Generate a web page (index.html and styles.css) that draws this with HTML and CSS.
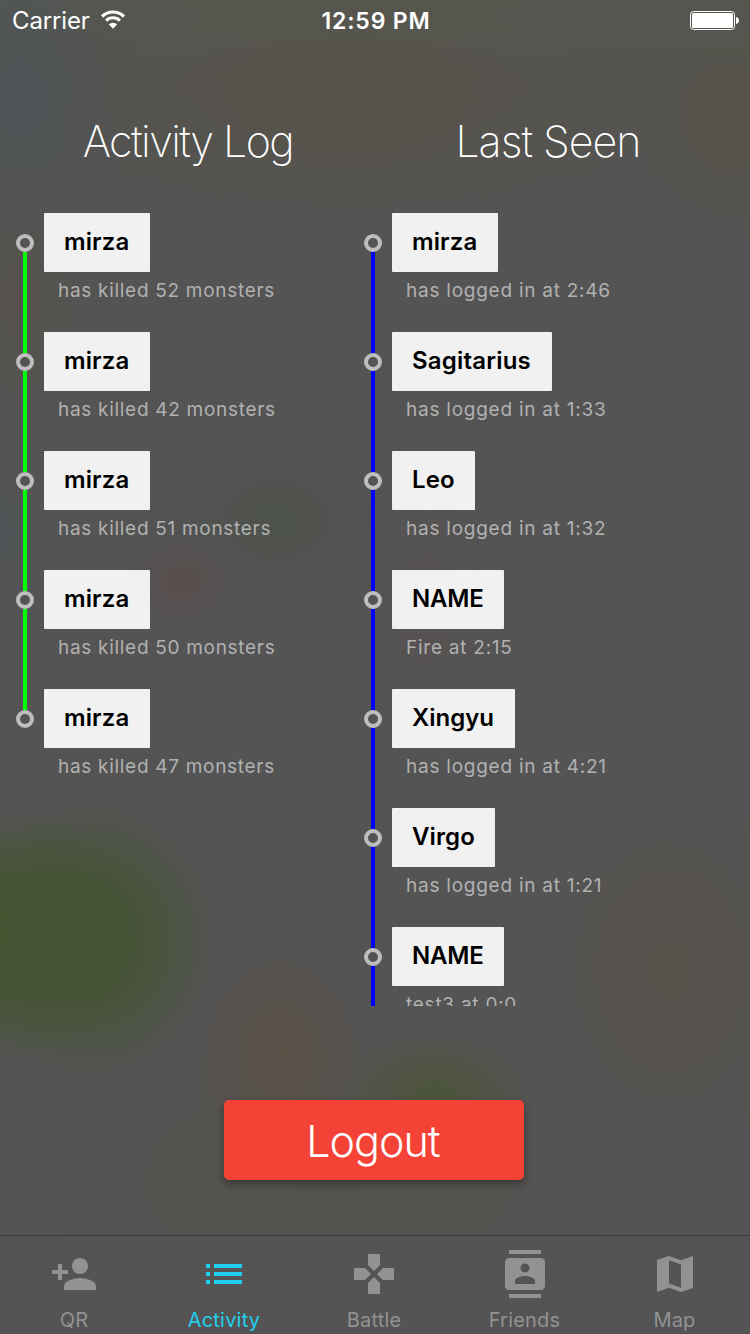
FILE: index.html
```html
<!DOCTYPE html>
<html lang="en">
<head>
<meta charset="utf-8">
<title>Activity</title>
<link rel="stylesheet" href="styles.css">
</head>
<body>
<div class="screen">
  <header class="status">
    <div class="status-left">
      <span class="carrier">Carrier</span>
      <svg class="wifi" width="26" height="20" viewBox="0 0 26 20">
        <path d="M2.1 6.5a15.4 15.4 0 0 1 21.8 0" fill="none" stroke="#fff" stroke-width="3.2"/>
        <path d="M6.1 10.6a9.8 9.8 0 0 1 13.8 0" fill="none" stroke="#fff" stroke-width="3"/>
        <path d="M13 18.7l-4.1-4.2a5.8 5.8 0 0 1 8.2 0z" fill="#fff"/>
      </svg>
    </div>
    <span class="clock">12:59 PM</span>
    <svg class="battery" width="50" height="20" viewBox="0 0 50 20">
      <rect x=".5" y=".5" width="44" height="18" rx="3" fill="none" stroke="#fff"/>
      <rect x="2" y="2" width="41" height="15" rx="1.5" fill="#fff"/>
      <path d="M46 6c1.800.4 3 1.800 3 3.500s-1.200 3.100-3 3.500z" fill="#fff"/>
    </svg>
  </header>

  <div class="titles">
    <h1 class="title title-log">Activity Log</h1>
    <h1 class="title title-seen">Last Seen</h1>
  </div>

  <main class="columns">
    <ul class="timeline green">
      <li class="entry"><span class="rail"></span><div class="body"><b class="name mirza">mirza</b><p class="note killed">has killed 52 monsters</p></div></li>
      <li class="entry"><span class="rail"></span><div class="body"><b class="name mirza">mirza</b><p class="note killed">has killed 42 monsters</p></div></li>
      <li class="entry"><span class="rail"></span><div class="body"><b class="name mirza">mirza</b><p class="note killed">has killed 51 monsters</p></div></li>
      <li class="entry"><span class="rail"></span><div class="body"><b class="name mirza">mirza</b><p class="note killed">has killed 50 monsters</p></div></li>
      <li class="entry last"><span class="rail"></span><div class="body"><b class="name mirza">mirza</b><p class="note killed">has killed 47 monsters</p></div></li>
    </ul>
    <ul class="timeline blue">
      <li class="entry"><span class="rail"></span><div class="body"><b class="name mirza">mirza</b><p class="note">has logged in at 2:46</p></div></li>
      <li class="entry"><span class="rail"></span><div class="body"><b class="name sagitarius">Sagitarius</b><p class="note">has logged in at 1:33</p></div></li>
      <li class="entry"><span class="rail"></span><div class="body"><b class="name leo">Leo</b><p class="note">has logged in at 1:32</p></div></li>
      <li class="entry"><span class="rail"></span><div class="body"><b class="name upper">NAME</b><p class="note">Fire at 2:15</p></div></li>
      <li class="entry"><span class="rail"></span><div class="body"><b class="name xingyu">Xingyu</b><p class="note">has logged in at 4:21</p></div></li>
      <li class="entry"><span class="rail"></span><div class="body"><b class="name virgo">Virgo</b><p class="note">has logged in at 1:21</p></div></li>
      <li class="entry"><span class="rail"></span><div class="body"><b class="name upper">NAME</b><p class="note">test3 at 0:0</p></div></li>
    </ul>
  </main>

  <div class="actions"><button class="logout">Logout</button></div>

  <nav class="tabs">
    <a class="tab">
      <svg class="icon" viewBox="0 0 24 24"><path d="M15 12c2.210 0 4-1.790 4-4s-1.790-4-4-4-4 1.790-4 4 1.790 4 4 4zm-9-2V7H4v3H1v2h3v3h2v-3h3v-2H6zm9 4c-2.670 0-8 1.340-8 4v2h16v-2c0-2.660-5.330-4-8-4z"/></svg>
      <span>QR</span>
    </a>
    <a class="tab active">
      <svg class="icon" viewBox="0 0 24 24"><path d="M3 13h2v-2H3v2zm0 4h2v-2H3v2zm0-8h2V7H3v2zm4 4h14v-2H7v2zm0 4h14v-2H7v2zM7 7v2h14V7H7z"/></svg>
      <span>Activity</span>
    </a>
    <a class="tab">
      <svg class="icon" viewBox="0 0 24 24"><path d="M15 7.500V2H9v5.500l3 3 3-3zM7.500 9H2v6h5.500l3-3-3-3zM9 16.500V22h6v-5.500l-3-3-3 3zM16.500 9l-3 3 3 3H22V9h-5.500z"/></svg>
      <span>Battle</span>
    </a>
    <a class="tab wide">
      <svg class="icon" viewBox="0 0 24 24"><path d="M20 0H4v2h16V0zM4 24h16v-2H4v2zM20 4H4c-1.100 0-2 .9-2 2v12c0 1.100.9 2 2 2h16c1.100 0 2-.9 2-2V6c0-1.100-.9-2-2-2zm-8 2.750c1.240 0 2.250 1.010 2.250 2.250s-1.010 2.250-2.250 2.250S9.750 10.240 9.750 9 10.760 6.750 12 6.750zM17 17H7v-1.500c0-1.670 3.330-2.500 5-2.500s5 .83 5 2.500V17z"/></svg>
      <span>Friends</span>
    </a>
    <a class="tab wide">
      <svg class="icon" viewBox="0 0 24 24"><path fill-rule="evenodd" d="M3 5l6-2 6 2.100L21 3v16l-6 2-6-2.100L3 21zM9 5.100v11.700l6 2.100V7.200z"/></svg>
      <span>Map</span>
    </a>
  </nav>
</div>
</body>
</html>
```
FILE: styles.css
```css
*, *::before, *::after { box-sizing: border-box; }

body {
  margin: 0;
  font-family: Inter, "Liberation Sans", sans-serif;
}

.screen {
  width: 750px;
  height: 1334px;
  display: flex;
  flex-direction: column;
  overflow: hidden;
  background:
    radial-gradient(ellipse 130px 140px at 90px 940px, rgba(69, 83, 51, .95) 0%, rgba(69, 83, 51, .8) 45%, rgba(69, 83, 51, 0) 100%),
    radial-gradient(ellipse 150px 125px at 0 935px, rgba(68, 84, 46, 1) 0%, rgba(68, 84, 46, .8) 45%, rgba(68, 84, 46, 0) 100%),
    radial-gradient(ellipse 95px 60px at 435px 1092px, rgba(76, 84, 58, 1), rgba(76, 84, 58, 0)),
    radial-gradient(ellipse 90px 110px at 280px 1050px, rgba(91, 80, 70, 1), rgba(91, 80, 70, 0)),
    radial-gradient(ellipse 55px 45px at 180px 582px, rgba(90, 77, 77, 1), rgba(90, 77, 77, 0)),
    radial-gradient(ellipse 130px 100px at 275px 520px, rgba(78, 82, 76, 1), rgba(78, 82, 76, 0)),
    radial-gradient(ellipse 70px 130px at 425px 610px, rgba(88, 81, 80, .7), rgba(88, 81, 80, 0)),
    radial-gradient(ellipse 140px 190px at 670px 970px, rgba(87, 82, 75, 1), rgba(87, 82, 75, 0)),
    radial-gradient(ellipse 120px 160px at 20px 90px, rgba(79, 84, 87, 1), rgba(79, 84, 87, 0)),
    radial-gradient(ellipse 90px 110px at 730px 130px, rgba(86, 83, 73, 1), rgba(86, 83, 73, 0)),
    radial-gradient(ellipse 80px 150px at 20px 300px, rgba(86, 83, 77, 1), rgba(86, 83, 77, 0)),
    radial-gradient(ellipse 90px 150px at 0 530px, rgba(81, 84, 86, 1), rgba(81, 84, 86, 0)),
    radial-gradient(ellipse 300px 130px at 350px 110px, rgba(87, 83, 75, 1), rgba(87, 83, 75, 0)),
    radial-gradient(ellipse 300px 160px at 330px 1180px, rgba(85, 83, 77, 1), rgba(85, 83, 77, 0)),
    linear-gradient(#55574f 0, #55544f 80px, #545454 210px, #545454 100%);
}

.status {
  height: 40px;
  flex: none;
  display: grid;
  grid-template-columns: 1fr auto 1fr;
  align-items: center;
  padding: 0 10px 0 12px;
  color: #fff;
  font-size: 24px;
  line-height: 40px;
}
.status-left { display: flex; align-items: center; gap: 10px; }
.carrier { letter-spacing: -.15px; padding-top: 1px; line-height: 39px; }
.wifi { display: block; }
.clock {
  padding-top: 2px;
  font-weight: 600;
  font-size: 23px;
  letter-spacing: .85px;
  line-height: 38px;
}
.battery { display: block; justify-self: end; margin-top: 2px; }

.titles {
  flex: none;
  height: 173px;
  padding-top: 72px;
  display: grid;
  grid-template-columns: 376px 344px;
}
.title {
  margin: 0;
  color: #fff;
  text-align: center;
  font-size: 43px;
  font-weight: 200;
  line-height: 58px;
  white-space: nowrap;
}
.title-log { letter-spacing: -1.55px; }
.title-seen { letter-spacing: -1px; }

.columns {
  flex: none;
  height: 793px;
  overflow: hidden;
  padding-left: 16px;
  display: grid;
  grid-template-columns: 348px 1fr;
  align-items: start;
}
.timeline { list-style: none; margin: 0; padding: 0; }
.green { --line: #00ff00; }
.blue { --line: #0000ff; }
.entry {
  display: grid;
  grid-template-columns: 18px 1fr;
  column-gap: 10px;
  height: 119px;
}
.rail {
  display: flex;
  flex-direction: column;
  align-items: center;
  height: 119px;
  margin-top: 20.5px;
}
.rail::before {
  content: "";
  flex: none;
  width: 18px;
  height: 18px;
  border: 4px solid #bebebe;
  border-radius: 50%;
}
.rail::after {
  content: "";
  flex: 1;
  width: 4px;
  background: var(--line);
}
.last .rail::after { display: none; }
.name {
  display: block;
  width: 106px;
  height: 59px;
  padding-left: 20px;
  border-radius: 1px;
  background: #f1f1f1;
  color: #000;
  font-size: 24px;
  font-weight: 600;
  letter-spacing: .1px;
  line-height: 58px;
  white-space: nowrap;
}
.sagitarius { width: 160px; letter-spacing: .2px; }
.leo { width: 83px; }
.upper { width: 112px; letter-spacing: -.2px; }
.xingyu { width: 123px; letter-spacing: 0; }
.virgo { width: 103px; }
.note {
  margin: 7px 0 0 14px;
  color: #b1b1b1;
  font-size: 19px;
  line-height: 24px;
  letter-spacing: .75px;
  white-space: nowrap;
}
.killed { letter-spacing: .7px; }

.actions {
  flex: none;
  height: 229px;
  padding: 94px 0 0 224px;
}
.logout {
  display: block;
  width: 300px;
  height: 80px;
  padding: 1px 2px 0 0;
  border: 0;
  border-radius: 5px;
  background: #f44336;
  box-shadow: 0 4px 8px rgba(0, 0, 0, .35);
  color: #fff;
  font-family: inherit;
  font-size: 43px;
  font-weight: 300;
  letter-spacing: -1px;
}

.tabs {
  flex: 1;
  display: grid;
  grid-template-columns: repeat(5, 150px);
  border-top: 1px solid #3a3a3a;
  background: #545454;
}
.tab {
  display: flex;
  flex-direction: column;
  align-items: center;
  padding: 14px 2px 0 0;
  color: #929292;
  font-size: 20px;
  line-height: 24px;
  letter-spacing: .2px;
}
.tab span { margin-top: 10px; }
.active { color: #1fd0ee; }
.icon { width: 48px; height: 48px; flex: none; fill: currentColor; }
.wide .icon { margin-left: 2px; }
.wide span { margin-left: 1px; }
```
